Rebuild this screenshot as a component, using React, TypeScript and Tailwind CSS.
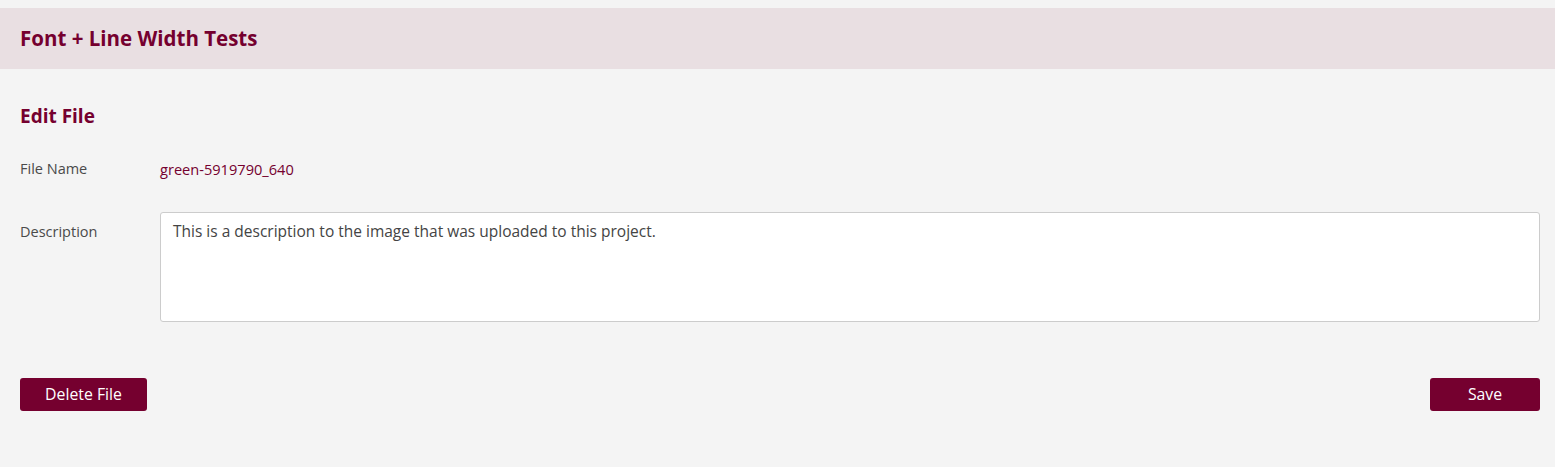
export default function App() {
  return (
    <div className="min-h-[467px] bg-[#f4f4f4] pt-2 font-['Open_Sans',sans-serif]">
      <div className="flex h-[61px] items-center bg-[#e9dfe2] px-5">
        <h1 className="text-[20.5px] font-bold text-[#75002f]">Font + Line Width Tests</h1>
      </div>

      <div className="pl-5 pr-[15px] pt-[33px]">
        <h2 className="text-[19px] leading-7 font-bold text-[#75002f]">Edit File</h2>

        <div className="mt-[29px] flex items-center leading-5">
          <div className="w-[140px] text-[14.5px] text-[#4a4a4a]">File Name</div>
          <div className="text-[14.6px] text-[#75002f]">green-5919790_640</div>
        </div>

        <div className="mt-[33px] flex">
          <div className="w-[140px] pt-[10px] text-[14.5px] leading-5 text-[#4a4a4a]">Description</div>
          <textarea
            className="h-[110px] flex-1 resize-none rounded-[3px] border border-[#cccccc] bg-white px-3 py-[7px] text-[15.5px] text-[#444] outline-none"
            defaultValue="This is a description to the image that was uploaded to this project."
          />
        </div>

        <div className="mt-[56px] flex justify-between">
          <button className="h-[33px] w-[127px] rounded-[3px] bg-[#75002f] text-[15.8px] text-white">
            Delete File
          </button>
          <button className="h-[33px] w-[110px] rounded-[3px] bg-[#75002f] text-[15.8px] text-white">
            Save
          </button>
        </div>
      </div>
    </div>
  )
}
